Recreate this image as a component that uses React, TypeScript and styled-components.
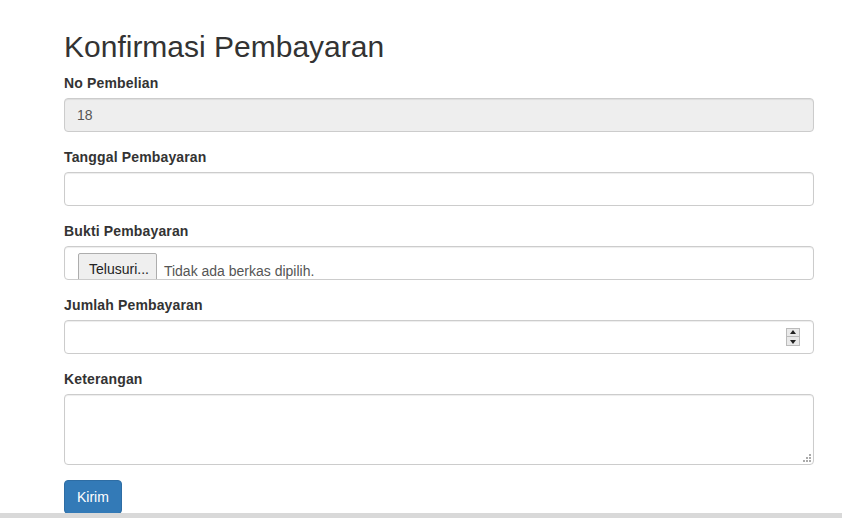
import React from "react";
import styled, { createGlobalStyle } from "styled-components";

const Global = createGlobalStyle`
  html, body { margin: 0; padding: 0; background: #fff; }
  body {
    font-family: "Liberation Sans", Arial, Helvetica, sans-serif;
    font-size: 14px;
    line-height: 1.42857143;
    color: #333;
  }
  * { box-sizing: border-box; }
`;

const Page = styled.div`
  padding: 30px 28px 0 64px;
  width: 842px;
`;

const Title = styled.h2`
  font-size: 30px;
  font-weight: 500;
  line-height: 33px;
  margin: 0 0 10px;
  color: #333;
`;

const Form = styled.form`
  width: 750px;
`;

const Group = styled.div`
  margin-bottom: 15px;
`;

const Label = styled.label`
  display: block;
  font-weight: 700;
  margin-bottom: 5px;
  line-height: 20px;
  letter-spacing: 0.15px;
`;

const Control = styled.div<{ $disabled?: boolean; $tall?: boolean }>`
  position: relative;
  display: flex;
  align-items: ${(p) => (p.$tall ? "flex-start" : "center")};
  width: 100%;
  height: ${(p) => (p.$tall ? "71px" : "34px")};
  padding: 6px 12px;
  border: 1px solid #ccc;
  border-radius: 4px;
  background: ${(p) => (p.$disabled ? "#eee" : "#fff")};
  box-shadow: inset 0 1px 1px rgba(0, 0, 0, 0.075);
  color: #555;
  font-size: 14px;
  overflow: hidden;
`;

const FileControl = styled(Control)`
  align-items: flex-start;
  padding: 6px 13px;
`;

const FileButton = styled.span`
  flex: none;
  display: inline-flex;
  align-items: center;
  height: 30px;
  padding: 2px 7px 0 10px;
  border: 1px solid #adadad;
  background: #efefef;
  color: #222;
  font-size: 14px;
  border-radius: 2px;
`;

const FileText = styled.span`
  margin-left: 7px;
  margin-top: 8px;
  font-size: 14px;
  color: #555;
`;

const Spinner = styled.div`
  position: absolute;
  right: 13px;
  top: 7px;
  width: 14px;
  height: 18px;
  border: 1px solid #bbb;
  background: #e9e9e9;
  display: flex;
  flex-direction: column;
  align-items: center;
  justify-content: space-around;
`;

const Arrow = styled.span<{ $up?: boolean }>`
  width: 0;
  height: 0;
  border-left: 3px solid transparent;
  border-right: 3px solid transparent;
  ${(p) => (p.$up ? "border-bottom: 4px solid #222;" : "border-top: 4px solid #222;")}
`;

const Divider = styled.span`
  width: 100%;
  height: 1px;
  background: #bbb;
`;

const Grip = styled.svg`
  position: absolute;
  right: 2px;
  bottom: 2px;
`;

const Button = styled.button`
  font-family: inherit;
  font-size: 14px;
  line-height: 20px;
  height: 34px;
  padding: 6px 12px;
  color: #fff;
  background: #337ab7;
  border: 1px solid #2e6da4;
  border-radius: 4px;
  margin: 0;
`;

const BottomBar = styled.div`
  position: fixed;
  left: 0;
  right: 0;
  bottom: 0;
  height: 5px;
  background: #d9d9d9;
`;

export default function App() {
  return (
    <>
      <Global />
      <Page>
        <Title>Konfirmasi Pembayaran</Title>
        <Form onSubmit={(e) => e.preventDefault()}>
          <Group>
            <Label>No Pembelian</Label>
            <Control $disabled>18</Control>
          </Group>
          <Group>
            <Label>Tanggal Pembayaran</Label>
            <Control />
          </Group>
          <Group>
            <Label>Bukti Pembayaran</Label>
            <FileControl>
              <FileButton>Telusuri...</FileButton>
              <FileText>Tidak ada berkas dipilih.</FileText>
            </FileControl>
          </Group>
          <Group>
            <Label>Jumlah Pembayaran</Label>
            <Control>
              <Spinner>
                <Arrow $up />
                <Divider />
                <Arrow />
              </Spinner>
            </Control>
          </Group>
          <Group>
            <Label>Keterangan</Label>
            <Control $tall>
              <Grip width="8" height="8" viewBox="0 0 8 8">
                <rect x="6" y="0" width="2" height="2" fill="#aaa" />
                <rect x="3" y="3" width="2" height="2" fill="#aaa" />
                <rect x="6" y="3" width="2" height="2" fill="#aaa" />
                <rect x="0" y="6" width="2" height="2" fill="#aaa" />
                <rect x="3" y="6" width="2" height="2" fill="#aaa" />
                <rect x="6" y="6" width="2" height="2" fill="#aaa" />
              </Grip>
            </Control>
          </Group>
          <Button type="submit">Kirim</Button>
        </Form>
      </Page>
      <BottomBar />
    </>
  );
}
